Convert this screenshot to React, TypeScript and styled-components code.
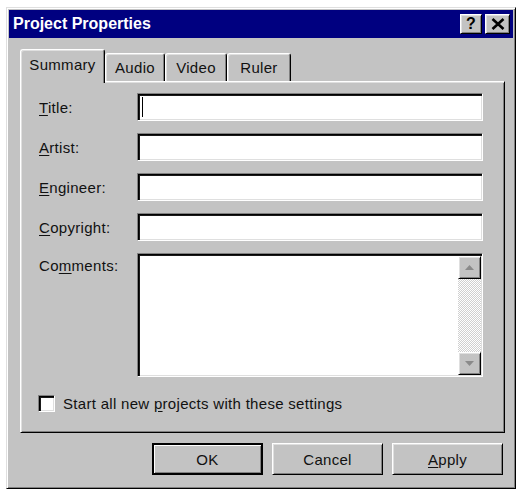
import React from 'react'
import styled, { createGlobalStyle, css } from 'styled-components'

const face = '#c3c3c3'

const GlobalStyle = createGlobalStyle`
    html, body {
        margin: 0;
        background: #fff;
    }
    body {
        font-family: "Liberation Sans", Arial, sans-serif;
        font-size: 15px;
        letter-spacing: 0.3px;
        color: #111;
    }
`

const raised = css`
    border: 1px solid;
    border-color: #fff #000 #000 #fff;
    box-shadow: inset 1px 1px #dfdfdf, inset -1px -1px #808080;
`

const sunken = css`
    border: 1px solid;
    border-color: #808080 #fff #fff #808080;
    box-shadow: inset 1px 1px #000, inset 2px 2px #1a1a1a, inset -1px -1px #dfdfdf;
`

const Page = styled.div`
    width: 518px;
    height: 490px;
    padding: 7px 2px 1px 6px;
    box-sizing: border-box;
`

const Window = styled.div`
    height: 100%;
    box-sizing: border-box;
    background: ${face};
    border: 1px solid;
    border-color: #dfdfdf #000 #000 #dfdfdf;
    box-shadow: inset 1px 1px #fff, inset -1px -1px #808080;
    padding: 2px;
    display: flex;
    flex-direction: column;
`

const TitleBar = styled.div`
    height: 28px;
    background: #000080;
    color: #fff;
    display: flex;
    align-items: center;
    padding: 0 3px 0 4px;
`

const TitleText = styled.div`
    flex: 1;
    font-weight: bold;
    font-size: 16px;
    letter-spacing: 0;
`

const Controls = styled.div`
    display: flex;
    gap: 3px;
`

const ControlButton = styled.div<{ $w: number }>`
    ${raised};
    width: ${p => p.$w}px;
    height: 20px;
    box-sizing: border-box;
    background: ${face};
    color: #000;
    font-weight: bold;
    font-size: 16px;
    display: flex;
    align-items: center;
    justify-content: center;
`

const Body = styled.div`
    flex: 1;
    display: flex;
    flex-direction: column;
    padding: 11px 8px 0 11px;
`

const TabStrip = styled.div`
    display: flex;
    align-items: flex-end;
    height: 32px;
`

const Tab = styled.div<{ $w: number; $active?: boolean }>`
    width: ${p => p.$w}px;
    height: ${p => (p.$active ? 34 : 28)}px;
    box-sizing: border-box;
    background: ${face};
    border-top: 1px solid #fff;
    border-left: 1px solid #fff;
    border-right: 1px solid #000;
    border-radius: 3px 3px 0 0;
    box-shadow: inset 1px 1px #dfdfdf, inset -1px 0 #808080;
    display: flex;
    align-items: center;
    justify-content: center;
    padding-bottom: ${p => (p.$active ? 4 : 0)}px;
    ${p => p.$active && css`
        position: relative;
        z-index: 1;
        margin-bottom: -2px;
    `}
`

const Panel = styled.div`
    ${raised};
    height: 352px;
    box-sizing: border-box;
    padding: 11px 21px 0 16px;
    display: flex;
    flex-direction: column;
`

const Form = styled.div`
    display: grid;
    grid-template-columns: 100px 1fr;
    grid-template-rows: repeat(4, 28px) 124px;
    row-gap: 12px;
`

const Label = styled.div<{ $top?: boolean }>`
    display: flex;
    align-items: ${p => (p.$top ? 'flex-start' : 'center')};
    padding-top: ${p => (p.$top ? 4 : 0)}px;
    padding-left: 2px;
`

const Field = styled.div`
    ${sunken};
    background: #fff;
    box-sizing: border-box;
    display: flex;
    align-items: center;
    padding-left: 4px;
`

const Caret = styled.span`
    width: 1px;
    height: 20px;
    background: #000;
`

const CommentBox = styled.div`
    ${sunken};
    background: #fff;
    box-sizing: border-box;
    display: flex;
    justify-content: flex-end;
    padding: 2px 1px 1px 0;
`

const Scrollbar = styled.div`
    width: 23px;
    display: flex;
    flex-direction: column;
    background-color: #fff;
    background-image: conic-gradient(#d0d0d0 25%, #fff 0 50%, #d0d0d0 0 75%, #fff 0);
    background-size: 2px 2px;
`

const ScrollButton = styled.div`
    ${raised};
    height: 23px;
    box-sizing: border-box;
    background: ${face};
    display: flex;
    align-items: center;
    justify-content: center;
`

const Track = styled.div`
    flex: 1;
`

const CheckRow = styled.div`
    display: flex;
    align-items: center;
    gap: 8px;
    margin-top: 18px;
    padding-left: 1px;
`

const CheckBox = styled.div`
    ${sunken};
    width: 17px;
    height: 17px;
    box-sizing: border-box;
    background: #fff;
`

const ButtonRow = styled.div`
    display: flex;
    justify-content: flex-end;
    gap: 9px;
    margin-top: 10px;
    padding-right: 2px;
`

const Button = styled.div<{ $default?: boolean }>`
    width: 111px;
    height: 32px;
    box-sizing: border-box;
    background: ${face};
    display: flex;
    align-items: center;
    justify-content: center;
    ${p => (p.$default
        ? css`
            border: 2px solid #000;
            box-shadow: inset 1px 1px #fff, inset -1px -1px #808080;
        `
        : raised)}
`

const Key = styled.span`
    text-decoration: underline;
    text-underline-offset: 2px;
`

const Arrow = ({ up }: { up?: boolean }) => (
    <svg width="9" height="5" viewBox="0 0 9 5">
        <path d={up ? 'M4.5 0 L9 5 L0 5 Z' : 'M0 0 L9 0 L4.5 5 Z'} fill="#8a8a8a" />
    </svg>
)

const CloseIcon = () => (
    <svg width="14" height="12" viewBox="0 0 14 12">
        <path d="M1.5 1 L12.5 11 M12.5 1 L1.5 11" stroke="#000" strokeWidth="2.6" />
    </svg>
)

const fields = [
    { key: 'T', rest: 'itle:', caret: true },
    { key: 'A', rest: 'rtist:' },
    { key: 'E', rest: 'ngineer:' },
    { key: 'C', rest: 'opyright:' },
]

export default function App() {
    return (
        <>
            <GlobalStyle />
            <Page>
                <Window>
                    <TitleBar>
                        <TitleText>Project Properties</TitleText>
                        <Controls>
                            <ControlButton $w={22}>?</ControlButton>
                            <ControlButton $w={25}><CloseIcon /></ControlButton>
                        </Controls>
                    </TitleBar>
                    <Body>
                        <TabStrip>
                            <Tab $w={85} $active>Summary</Tab>
                            <Tab $w={60}>Audio</Tab>
                            <Tab $w={62}>Video</Tab>
                            <Tab $w={64}>Ruler</Tab>
                        </TabStrip>
                        <Panel>
                            <Form>
                                {fields.map(f => (
                                    <React.Fragment key={f.key}>
                                        <Label><span><Key>{f.key}</Key>{f.rest}</span></Label>
                                        <Field>{f.caret && <Caret />}</Field>
                                    </React.Fragment>
                                ))}
                                <Label $top><span>Co<Key>m</Key>ments:</span></Label>
                                <CommentBox>
                                    <Scrollbar>
                                        <ScrollButton><Arrow up /></ScrollButton>
                                        <Track />
                                        <ScrollButton><Arrow /></ScrollButton>
                                    </Scrollbar>
                                </CommentBox>
                            </Form>
                            <CheckRow>
                                <CheckBox />
                                <span>Start all new <Key>p</Key>rojects with these settings</span>
                            </CheckRow>
                        </Panel>
                        <ButtonRow>
                            <Button $default>OK</Button>
                            <Button>Cancel</Button>
                            <Button><span><Key>A</Key>pply</span></Button>
                        </ButtonRow>
                    </Body>
                </Window>
            </Page>
        </>
    )
}
